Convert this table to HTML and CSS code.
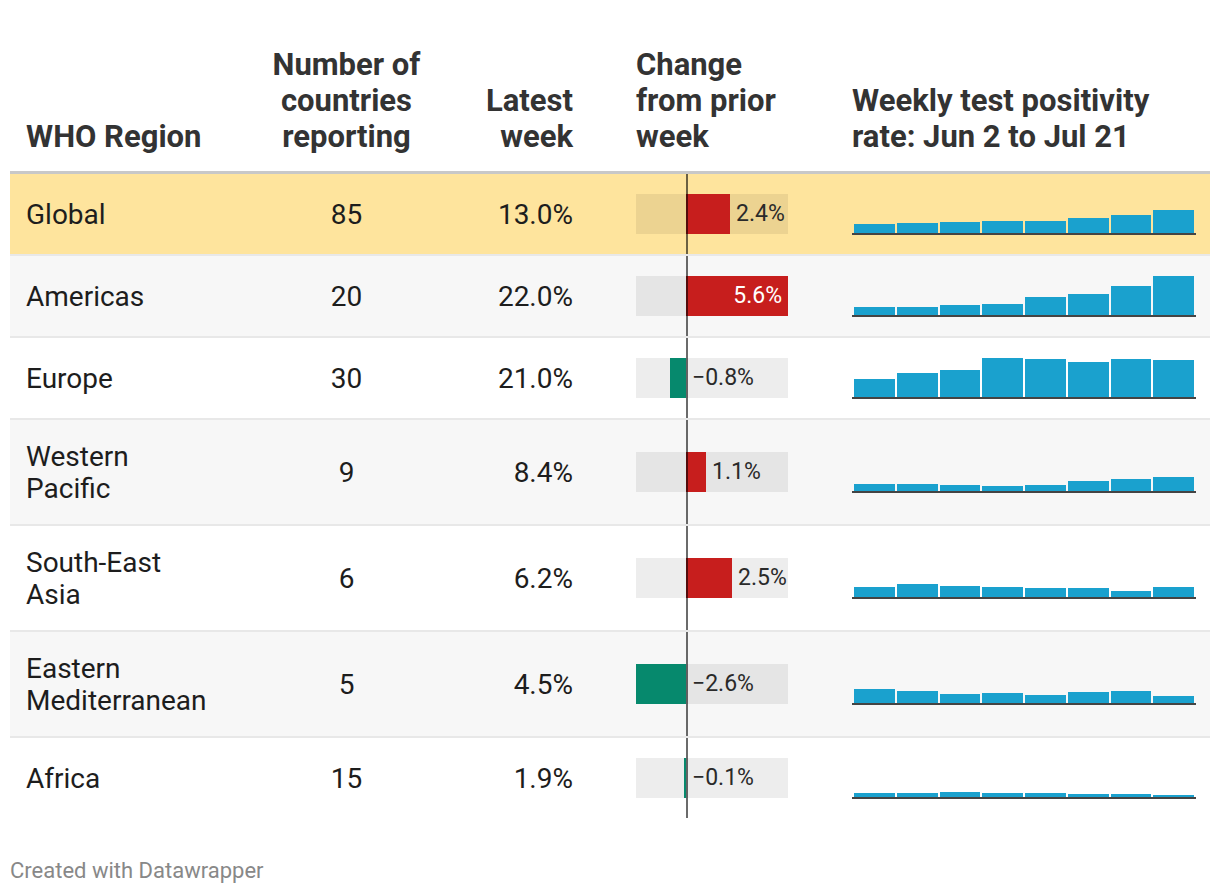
FILE: index.html
```html
<!DOCTYPE html>
<html lang="en">
<head>
<meta charset="utf-8">
<title>Weekly test positivity by WHO region</title>
<link rel="stylesheet" href="styles.css">
</head>
<body>
<div class="chart">
  <div class="table">
    <div class="row head">
      <div class="cell c1">WHO Region</div>
      <div class="cell c2">Number of countries reporting</div>
      <div class="cell c3">Latest week</div>
      <div class="cell c4">Change from prior week</div>
      <div class="cell c5">Weekly test positivity rate: Jun 2 to Jul 21</div>
    </div>

    <div class="row hl">
      <div class="cell c1">Global</div>
      <div class="cell c2">85</div>
      <div class="cell c3">13.0%</div>
      <div class="cell c4"><div class="chg"><div class="neg"></div><div class="pos"><div class="bar red" style="width:44px"></div><span class="lbl">2.4%</span></div></div></div>
      <div class="cell c5"><div class="spark"><i style="height:9px"></i><i style="height:10px"></i><i style="height:11px"></i><i style="height:12px"></i><i style="height:12px"></i><i style="height:15px"></i><i style="height:18px"></i><i style="height:23px"></i></div></div>
    </div>

    <div class="row alt">
      <div class="cell c1">Americas</div>
      <div class="cell c2">20</div>
      <div class="cell c3">22.0%</div>
      <div class="cell c4"><div class="chg"><div class="neg"></div><div class="pos"><div class="bar red inside" style="width:102px"><span class="lbl">5.6%</span></div></div></div></div>
      <div class="cell c5"><div class="spark"><i style="height:8px"></i><i style="height:8px"></i><i style="height:10px"></i><i style="height:11px"></i><i style="height:18px"></i><i style="height:21px"></i><i style="height:29px"></i><i style="height:39px"></i></div></div>
    </div>

    <div class="row">
      <div class="cell c1">Europe</div>
      <div class="cell c2">30</div>
      <div class="cell c3">21.0%</div>
      <div class="cell c4"><div class="chg"><div class="neg"><div class="bar green" style="width:16px"></div></div><div class="pos"><span class="lbl">&minus;0.8%</span></div></div></div>
      <div class="cell c5"><div class="spark"><i style="height:18px"></i><i style="height:24px"></i><i style="height:27px"></i><i style="height:39px"></i><i style="height:38px"></i><i style="height:35px"></i><i style="height:38px"></i><i style="height:37px"></i></div></div>
    </div>

    <div class="row alt">
      <div class="cell c1">Western Pacific</div>
      <div class="cell c2">9</div>
      <div class="cell c3">8.4%</div>
      <div class="cell c4"><div class="chg"><div class="neg"></div><div class="pos"><div class="bar red" style="width:20px"></div><span class="lbl">1.1%</span></div></div></div>
      <div class="cell c5"><div class="spark"><i style="height:7px"></i><i style="height:7px"></i><i style="height:6px"></i><i style="height:5px"></i><i style="height:6px"></i><i style="height:10px"></i><i style="height:12px"></i><i style="height:14px"></i></div></div>
    </div>

    <div class="row">
      <div class="cell c1">South-East Asia</div>
      <div class="cell c2">6</div>
      <div class="cell c3">6.2%</div>
      <div class="cell c4"><div class="chg"><div class="neg"></div><div class="pos"><div class="bar red" style="width:46px"></div><span class="lbl">2.5%</span></div></div></div>
      <div class="cell c5"><div class="spark"><i style="height:10px"></i><i style="height:13px"></i><i style="height:11px"></i><i style="height:10px"></i><i style="height:9px"></i><i style="height:9px"></i><i style="height:6px"></i><i style="height:10px"></i></div></div>
    </div>

    <div class="row alt">
      <div class="cell c1">Eastern Mediterranean</div>
      <div class="cell c2">5</div>
      <div class="cell c3">4.5%</div>
      <div class="cell c4"><div class="chg"><div class="neg"><div class="bar green" style="width:50px"></div></div><div class="pos"><span class="lbl">&minus;2.6%</span></div></div></div>
      <div class="cell c5"><div class="spark"><i style="height:14px"></i><i style="height:12px"></i><i style="height:9px"></i><i style="height:10px"></i><i style="height:8px"></i><i style="height:11px"></i><i style="height:12px"></i><i style="height:7px"></i></div></div>
    </div>

    <div class="row last">
      <div class="cell c1">Africa</div>
      <div class="cell c2">15</div>
      <div class="cell c3">1.9%</div>
      <div class="cell c4"><div class="chg"><div class="neg"><div class="bar green" style="width:2px"></div></div><div class="pos"><span class="lbl">&minus;0.1%</span></div></div></div>
      <div class="cell c5"><div class="spark"><i style="height:4px"></i><i style="height:4px"></i><i style="height:5px"></i><i style="height:4px"></i><i style="height:4px"></i><i style="height:3px"></i><i style="height:3px"></i><i style="height:2px"></i></div></div>
    </div>
  </div>

  <div class="footer">Created with Datawrapper</div>
</div>
</body>
</html>
```

FILE: styles.css
```css
* {
  box-sizing: border-box;
}

html, body {
  margin: 0;
  padding: 0;
  background: #ffffff;
}

body {
  font-family: Roboto, "Noto Sans", "Liberation Sans", sans-serif;
  color: #1d1d1d;
}

.chart {
  padding: 47px 10px 0 10px;
}

.table {
  width: 1200px;
}

.row {
  display: grid;
  grid-template-columns: 252px 169px 189px 216px 374px;
  align-items: stretch;
  border-bottom: 2px solid #e8e8e8;
  background: #ffffff;
}

.row.alt {
  background: #f7f7f7;
}

.row.hl {
  background: #fee49d;
}

.row.last {
  border-bottom: none;
}

.cell {
  display: flex;
  align-items: center;
  font-size: 28px;
  line-height: 32px;
}

.c1 {
  padding: 21px 51px 19px 16px;
}

.c2 {
  padding: 21px 8px 19px 8px;
  justify-content: center;
  text-align: center;
}

.c3 {
  padding: 21px 47px 19px 8px;
  justify-content: flex-end;
  text-align: right;
}

.c4 {
  padding: 20px 48px 20px 16px;
  position: relative;
}

.c5 {
  padding: 19px 14px 19px 16px;
}

/* header */
.row.head {
  align-items: end;
  border-bottom: 3px solid #c8c8c8;
}

.row.head .cell {
  display: block;
  font-size: 31px;
  font-weight: 700;
  color: #333333;
  line-height: 36px;
  padding-top: 0;
  padding-bottom: 16px;
}

.row.head .c3 {
  text-align: right;
}

.row.head .c4::before {
  display: none;
}

/* zero line of change column */
.row .c4::before {
  content: "";
  position: absolute;
  left: 66px;
  top: 0;
  bottom: 0;
  width: 2px;
  background: rgba(0, 0, 0, 0.58);
  z-index: 2;
}

.chg {
  display: flex;
  width: 152px;
  height: 40px;
  background: rgba(0, 0, 0, 0.07);
}

.neg {
  width: 50px;
  display: flex;
  justify-content: flex-end;
}

.pos {
  width: 102px;
  display: flex;
  align-items: center;
}

.bar {
  height: 40px;
  flex: none;
}

.bar.red {
  background: #c71e1d;
}

.bar.green {
  background: #06896d;
}

.bar.inside {
  display: flex;
  align-items: center;
  justify-content: flex-end;
}

.lbl {
  font-size: 23px;
  line-height: 40px;
  color: #2a2a2a;
  padding-left: 6px;
  white-space: nowrap;
}

.bar.inside .lbl {
  color: #ffffff;
  padding-left: 0;
  padding-right: 6px;
}

/* sparkline */
.spark {
  width: 344px;
  height: 42px;
  display: flex;
  align-items: flex-end;
  gap: 2px;
  padding: 0 2px;
  border-bottom: 2px solid #444444;
}

.spark i {
  display: block;
  flex: 1;
  background: #1aa1ce;
}

.footer {
  margin-top: 41px;
  font-size: 22px;
  line-height: 24px;
  color: #888888;
}
```
